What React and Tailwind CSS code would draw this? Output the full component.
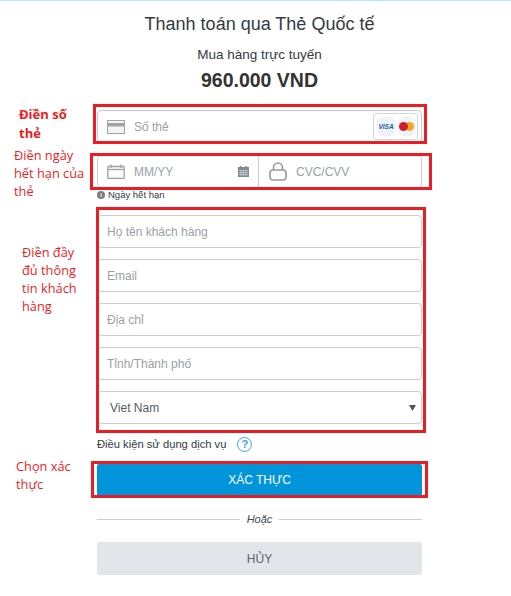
const sans = "font-['Liberation_Sans',Arial,sans-serif]";
const note = "font-['Open_Sans','Noto_Sans',sans-serif]";

function Field({ label, className = "" }) {
  return (
    <div className={"h-[33px] rounded-[4px] border border-[#cccccc] bg-white pl-[9px] flex items-center text-[12px] text-[#9a9fa6] " + className}>
      {label}
    </div>
  );
}

function RedBox({ className }) {
  return <div className={"absolute border-[3px] border-[#ed1c24] pointer-events-none " + className} />;
}

function CardIcon() {
  return (
    <svg width="18" height="14" viewBox="0 0 18 14" className="shrink-0">
      <rect x="0.5" y="0.5" width="17" height="13" fill="#f4f4f4" stroke="#a3a3a3" />
      <rect x="1" y="3" width="16" height="3.5" fill="#a3a3a3" />
    </svg>
  );
}

function CalendarIcon() {
  return (
    <svg width="18" height="15" viewBox="0 0 18 15" className="shrink-0">
      <rect x="0.75" y="2.5" width="16.5" height="12" rx="1" fill="#fbfbfb" stroke="#a0a0a0" strokeWidth="1.3" />
      <path d="M1 5.5h16" stroke="#a0a0a0" strokeWidth="1.3" />
      <path d="M4 0.5v3.5M14 0.5v3.5" stroke="#a0a0a0" strokeWidth="1.3" />
    </svg>
  );
}

function SmallCalendar() {
  return (
    <svg width="11" height="11" viewBox="0 0 11 11" className="shrink-0">
      <rect x="0" y="1" width="11" height="10" fill="#7f8a93" />
      <rect x="2" y="0" width="1.5" height="2" fill="#7f8a93" />
      <rect x="7.5" y="0" width="1.5" height="2" fill="#7f8a93" />
      <path d="M1 4.5h9M1 6.5h9M1 8.5h9M3 4v6M5.5 4v6M8 4v6" stroke="#cfd5d9" strokeWidth="0.7" />
    </svg>
  );
}

function LockIcon() {
  return (
    <svg width="18" height="19" viewBox="0 0 18 19" className="shrink-0">
      <path d="M4.5 8V5.5a4.5 4.5 0 0 1 9 0V8" fill="none" stroke="#999999" strokeWidth="1.6" />
      <rect x="1" y="8" width="16" height="10" rx="3" fill="none" stroke="#999999" strokeWidth="1.6" />
    </svg>
  );
}

function Badges() {
  return (
    <div className="w-[45px] h-[27px] rounded-[3px] border border-[#d5d5d5] bg-white flex items-center justify-center mr-[3px]">
      <div className="w-[21px] h-[21px] rounded-full bg-[#eef3f7] flex items-center justify-center text-[6.5px] font-bold italic text-[#1a5a96] font-['Liberation_Sans',sans-serif]">VISA</div>
      <div className="w-[19px] h-[21px] rounded-full bg-[#eef3f7] flex items-center justify-center">
        <svg width="15" height="9" viewBox="0 0 15 9">
          <circle cx="10.5" cy="4.5" r="4.5" fill="#f5a623" />
          <circle cx="4.5" cy="4.5" r="4.5" fill="#cf1f2e" />
        </svg>
      </div>
    </div>
  );
}

export default function App() {
  return (
    <div className={"relative w-[511px] h-[596px] bg-white overflow-hidden border-t border-[#b9ecf2] " + sans}>
      <div className="ml-[97px] w-[325px] flex flex-col">
        <div className="flex flex-col items-center text-center">
          <div className="mt-[11px] text-[18px] leading-[24px] text-[#333b45]">Thanh toán qua Thẻ Quốc tế</div>
          <div className="mt-[9px] text-[13.5px] leading-[20px] text-[#333b45]">Mua hàng trực tuyến</div>
          <div className="mt-[2px] text-[19.5px] leading-[26px] font-bold text-[#333333]">960.000 VND</div>
        </div>

        <div className="mt-[17px] h-[33px] rounded-[4px] border border-[#cccccc] flex items-center pl-[9px] text-[12px] text-[#9a9fa6]">
          <CardIcon />
          <span className="ml-[9px] flex-1">Số thẻ</span>
          <Badges />
        </div>

        <div className="mt-[12px] h-[33px] rounded-[4px] border border-[#cccccc] flex items-center text-[12px] text-[#9a9fa6]">
          <div className="w-[161px] h-full flex items-center pl-[9px] pr-[9px] border-r border-[#cccccc]">
            <CalendarIcon />
            <span className="ml-[9px] flex-1">MM/YY</span>
            <SmallCalendar />
          </div>
          <div className="flex-1 flex items-center pl-[10px]">
            <LockIcon />
            <span className="ml-[9px]">CVC/CVV</span>
          </div>
        </div>

        <div className="h-[14px] flex items-center text-[9.5px] text-[#333b45]">
          <span className="w-[8px] h-[8px] rounded-full bg-[#7a7f84] text-white text-[6px] font-bold flex items-center justify-center mr-[3px]">i</span>
          Ngày hết hạn
        </div>

        <div className="mt-[13px] flex flex-col gap-[11px]">
          <Field label="Họ tên khách hàng" />
          <Field label="Email" />
          <Field label="Địa chỉ" />
          <Field label="Tỉnh/Thành phố" />
          <div className="h-[33px] rounded-[4px] border border-[#cccccc] flex items-center pl-[12px] pr-[5px] text-[12px] text-[#555b62]">
            <span className="flex-1">Viet Nam</span>
            <svg width="7" height="6" viewBox="0 0 7 6"><path d="M0 0h7L3.5 6z" fill="#555555" /></svg>
          </div>
        </div>

        <div className="mt-[11px] h-[18px] flex items-center text-[11.2px] text-[#333b45]">
          <span>Điều kiện sử dụng dịch vụ</span>
          <span className="ml-[11px] w-[15px] h-[15px] rounded-full border-[1.5px] border-[#3aa6dd] text-[#3aa6dd] text-[11px] font-bold flex items-center justify-center">?</span>
        </div>

        <div className="mt-[11px] h-[32px] rounded-[2px] bg-[#0095da] text-white text-[12px] flex items-center justify-center">XÁC THỰC</div>

        <div className="mt-[15px] h-[16px] flex items-center gap-[7px] text-[11px] italic text-[#444b54]">
          <div className="flex-1 h-px bg-[#cccccc]" />
          <span>Hoặc</span>
          <div className="flex-1 h-px bg-[#cccccc]" />
        </div>

        <div className="mt-[15px] h-[33px] rounded-[3px] bg-[#e2e6ea] text-[#5a6068] text-[12px] flex items-center justify-center">HỦY</div>
      </div>

      <RedBox className="left-[93px] top-[103px] w-[334px] h-[40px]" />
      <RedBox className="left-[90px] top-[152px] w-[342px] h-[37px]" />
      <RedBox className="left-[96px] top-[206px] w-[330px] h-[226px]" />
      <RedBox className="left-[91px] top-[460px] w-[337px] h-[37px]" />

      <div className={"absolute left-[19px] top-[104px] w-[60px] text-[13px] leading-[19px] font-bold text-[#ed1c24] " + note}>Điền số thẻ</div>
      <div className={"absolute left-[14px] top-[145px] w-[76px] text-[12.8px] leading-[18px] text-[#ed1c24] " + note}>Điền ngày hết hạn của thẻ</div>
      <div className={"absolute left-[22px] top-[242px] w-[64px] text-[12.8px] leading-[18px] text-[#ed1c24] " + note}>Điền đầy đủ thông tin khách hàng</div>
      <div className={"absolute left-[16px] top-[456px] w-[64px] text-[12.8px] leading-[18px] text-[#ed1c24] " + note}>Chọn xác thực</div>
    </div>
  );
}
